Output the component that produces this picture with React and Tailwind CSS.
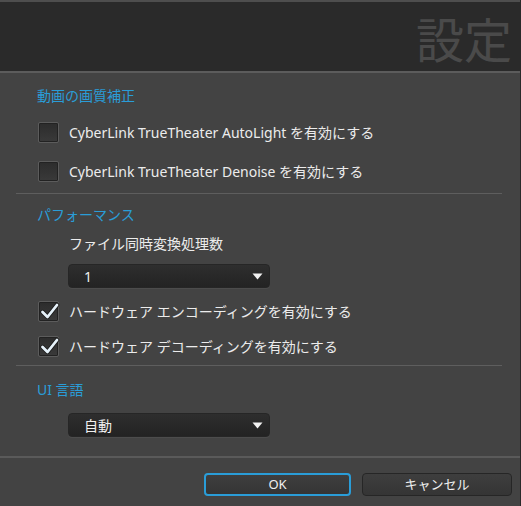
import React from "react";

const font = { fontFamily: '"Noto Sans", "Noto Sans CJK JP", sans-serif' };

function Box({ checked }) {
  return (
    <div className="relative w-[21px] h-[21px] rounded-[2px] border border-[#5c5c5c] bg-gradient-to-b from-[#2c2c2c] to-[#3a3a3a] shadow-[inset_0_0_0_1px_#222] shrink-0">
      {checked && (
        <svg className="absolute left-[0px] top-[-1px]" width="21" height="21" viewBox="0 0 21 21">
          <path d="M3.5 11 L8.5 16 L18 4" fill="none" stroke="#1a1a1a" strokeWidth="4.4" strokeLinecap="round" strokeLinejoin="round" />
          <path d="M3.5 11 L8.5 16 L18 4" fill="none" stroke="#e6f2fa" strokeWidth="2.8" strokeLinecap="round" strokeLinejoin="round" />
        </svg>
      )}
    </div>
  );
}

function Check({ checked, label }) {
  return (
    <div className="flex items-center gap-[10px] pl-[38px] h-[22px]">
      <Box checked={checked} />
      <span className="text-[14px] text-[#ececec] whitespace-nowrap">{label}</span>
    </div>
  );
}

function Select({ value }) {
  return (
    <div className="ml-[68px] w-[202px] h-[24px] rounded-[4px] bg-gradient-to-b from-[#2e2e2e] to-[#232323] border border-[#262626] flex items-center justify-between pl-[15px] pr-[6px] shadow-[0_1px_0_#4c4c4c]">
      <span className="text-[14px] text-[#f0f0f0]">{value}</span>
      <svg width="11" height="7" viewBox="0 0 11 7">
        <path d="M0.5 0.5 H10.5 L5.5 6.5 Z" fill="#f2f2f2" />
      </svg>
    </div>
  );
}

function Section({ children }) {
  return <div className="pl-[37px] text-[14px] text-[#2a9dd8] h-[20px] flex items-center">{children}</div>;
}

export default function App() {
  return (
    <div style={font} className="w-[521px] h-[506px] bg-[#434343] flex flex-col overflow-hidden border-r border-[#2a2a2a]">
      <div className="h-[71px] bg-[#2a2a2a] border-t-[2px] border-[#4e4e4e] flex items-center justify-end pr-[8px] shrink-0">
        <span className="text-[48px] leading-none text-[#4a4a4a] mt-[1px]" style={{ fontFamily: '"Noto Sans CJK JP", sans-serif' }}>設定</span>
      </div>
      <div className="h-[2px] bg-[#5c5c5c] shrink-0" />
      <div className="flex flex-col pt-[12px]">
        <Section>動画の画質補正</Section>
        <div className="mt-[16px]"><Check label="CyberLink TrueTheater AutoLight を有効にする" /></div>
        <div className="mt-[17px]"><Check label="CyberLink TrueTheater Denoise を有効にする" /></div>
        <div className="mt-[11px] ml-[16px] mr-[18px] h-[1px] bg-[#5e5e5e]" />
        <div className="mt-[10px]"><Section>パフォーマンス</Section></div>
        <div className="mt-[9px] pl-[69px] text-[14px] text-[#ececec] h-[20px] flex items-center">ファイル同時変換処理数</div>
        <div className="mt-[11px]"><Select value="1" /></div>
        <div className="mt-[12px]"><Check checked label="ハードウェア エンコーディングを有効にする" /></div>
        <div className="mt-[13px]"><Check checked label="ハードウェア デコーディングを有効にする" /></div>
        <div className="mt-[8px] ml-[16px] mr-[18px] h-[1px] bg-[#5e5e5e]" />
        <div className="mt-[13px]"><Section>UI 言語</Section></div>
        <div className="mt-[14px]"><Select value="自動" /></div>
        <div className="mt-[19px] h-[2px] bg-[#5a5a5a]" />
        <div className="flex justify-end gap-[11px] pr-[8px] mt-[15px]">
          <button className="w-[147px] h-[23px] rounded-[4px] border-[2px] border-[#2a9dd8] bg-gradient-to-b from-[#3e3e3e] to-[#353535] text-[13px] text-[#f0f0f0] flex items-center justify-center">OK</button>
          <button className="w-[150px] h-[23px] rounded-[4px] border border-[#262626] bg-gradient-to-b from-[#3e3e3e] to-[#353535] text-[13px] text-[#f0f0f0] flex items-center justify-center">キャンセル</button>
        </div>
      </div>
    </div>
  );
}
